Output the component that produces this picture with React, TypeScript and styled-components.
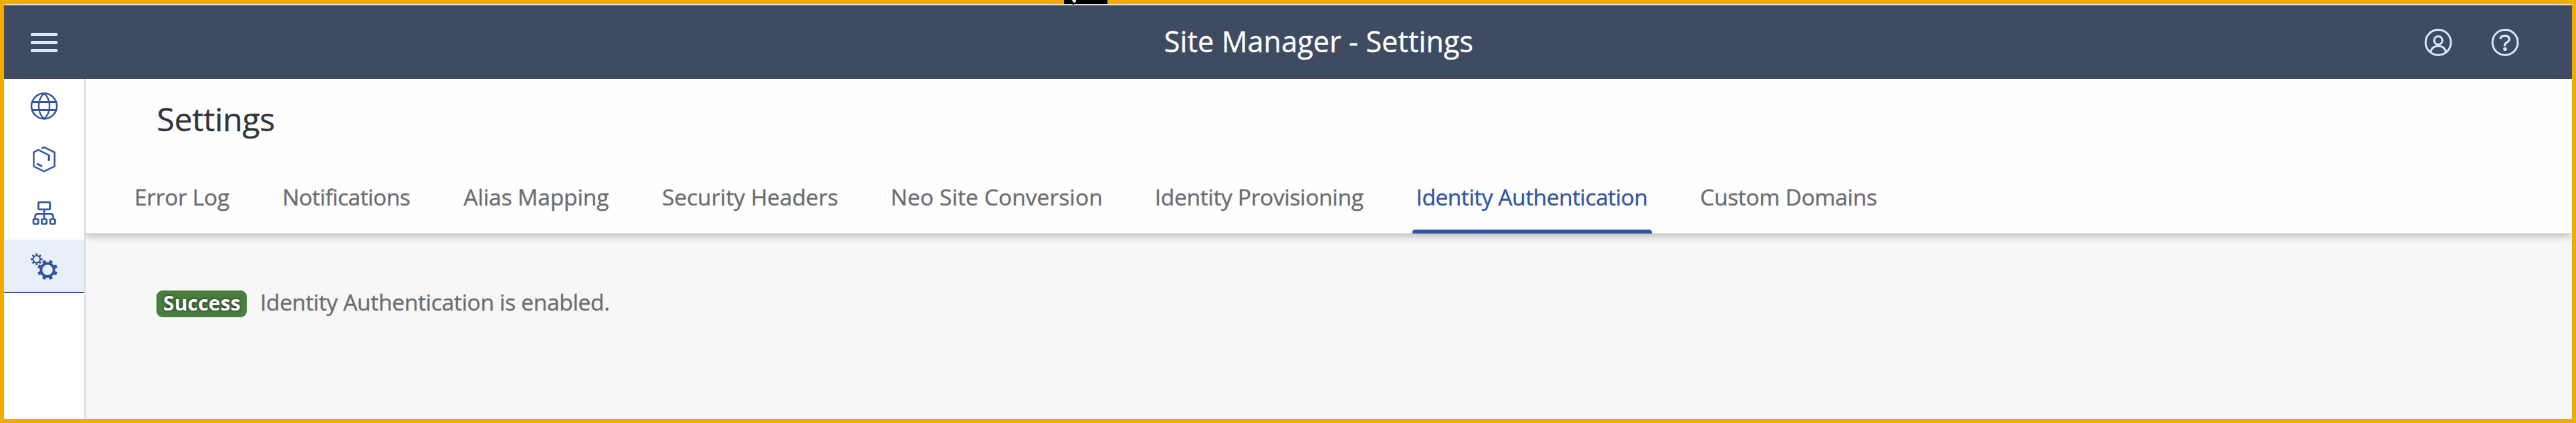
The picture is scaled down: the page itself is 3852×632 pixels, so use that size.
import React from 'react';
import styled, { createGlobalStyle, css } from 'styled-components';

const GlobalStyle = createGlobalStyle`
  * { box-sizing: border-box; }
  body { margin: 0; font-family: "Open Sans", "Noto Sans", sans-serif; font-weight: 400; }
`;

const Frame = styled.div`
  position: relative;
  display: flex;
  flex-direction: column;
  width: 3852px;
  height: 632px;
  padding: 6px;
  background: #f0ab00;
  overflow: hidden;
`;

const TopMark = styled.svg`
  position: absolute;
  top: 0;
  left: 1591px;
  display: block;
`;

const Shell = styled.header`
  flex: 0 0 112px;
  display: grid;
  grid-template-columns: 1fr auto 1fr;
  align-items: center;
  border-top: 2px solid #e2e2e2;
  background: #3f4b61;
  padding: 0 80px 0 40px;
  color: #d9e7fe;
`;

const ShellTitle = styled.h1`
  margin: 0 0 3px 132px;
  font-size: 43px;
  font-weight: 400;
  line-height: 60px;
  letter-spacing: 0.167px;
  white-space: nowrap;
  color: #fff;
  -webkit-text-stroke: 0.4px currentColor;
`;

const ShellActions = styled.div`
  display: flex;
  justify-content: flex-end;
  gap: 60px;
`;

const Icon = styled.svg`
  display: block;
  width: 40px;
  height: 40px;
  overflow: visible;
  fill: none;
  stroke: currentColor;
`;

const Body = styled.div`
  flex: 1;
  display: flex;
  min-height: 0;
  background: #f7f7f7;
  overflow: hidden;
`;

const SideNav = styled.nav`
  flex: 0 0 122px;
  position: relative;
  z-index: 1;
  border-right: 2px solid #d9d9d9;
  background: #fff;
  color: #3155a1;
`;

const NavItem = styled.div<{ $active?: boolean }>`
  display: flex;
  align-items: center;
  justify-content: center;
  height: 80px;
  ${p => p.$active && css`
    background: #e8eff9;
    box-shadow: inset 0 -2px 0 #3155a1;
  `}
`;

const Main = styled.main`
  flex: 1;
  min-width: 0;
`;

const PageHeader = styled.section`
  height: 232px;
  padding-top: 28px;
  background: #fefefe;
  border-bottom: 2px solid #d9d9d9;
  box-shadow: 0 2px 12px rgba(0, 0, 0, 0.28);
`;

const PageTitle = styled.h2`
  margin: 0 0 32px;
  padding-left: 106.5px;
  font-size: 48px;
  font-weight: 400;
  line-height: 64px;
  letter-spacing: -0.182px;
  color: #32363a;
  -webkit-text-stroke: 0.4px currentColor;
`;

const Tabs = styled.div`
  display: flex;
  gap: 80px;
  height: 106px;
  padding-left: 73px;
  background: linear-gradient(#fefefe 98px, #f9f9f9 98px, #f9f9f9 99px, #fff 99px);
`;

const Tab = styled.div<{ $width: number; $spacing: number; $active?: boolean }>`
  position: relative;
  flex: 0 0 ${p => p.$width}px;
  min-width: 0;
  font-size: 33.6px;
  line-height: 105px;
  letter-spacing: ${p => p.$spacing}px;
  white-space: nowrap;
  color: ${p => (p.$active ? '#3155a1' : '#6a6d70')};
  -webkit-text-stroke: 0.4px currentColor;
  ${p => p.$active && css`
    &::after {
      content: '';
      position: absolute;
      left: -6px;
      right: -8px;
      bottom: -1px;
      height: 6px;
      border-radius: 4px 4px 0 0;
      background: #3155a1;
    }
  `}
`;

const Status = styled.div`
  display: flex;
  align-items: baseline;
  gap: 20px;
  padding: 81.5px 0 0 106px;
`;

const Badge = styled.span`
  flex: 0 0 135px;
  height: 40px;
  padding-left: 10px;
  border-radius: 9px;
  background: #4a7d40;
  color: #fff;
  font-size: 30px;
  font-weight: 700;
  line-height: 38px;
  letter-spacing: 0.188px;
  text-shadow: 0 0 4px rgba(0, 0, 0, 0.7);
`;

const Message = styled.span`
  font-size: 33.6px;
  line-height: 38px;
  letter-spacing: -0.346px;
  white-space: nowrap;
  color: #6a6d70;
  -webkit-text-stroke: 0.4px currentColor;
`;

const tabs = [
  { label: 'Error Log', width: 141.3, spacing: -0.322 },
  { label: 'Notifications', width: 191.05, spacing: -0.512 },
  { label: 'Alias Mapping', width: 216.6, spacing: -0.137 },
  { label: 'Security Headers', width: 261.75, spacing: -0.106 },
  { label: 'Neo Site Conversion', width: 315, spacing: 0.056 },
  { label: 'Identity Provisioning', width: 310.9, spacing: -0.353 },
  { label: 'Identity Authentication', width: 344.75, spacing: -0.507, active: true },
  { label: 'Custom Domains', width: 264, spacing: -0.341 },
];

/* Outline of a gear with eight flat teeth. */
function gearPath(cx: number, cy: number, outer: number, root: number, hole: number, turn: number) {
  const at = (r: number, deg: number) => {
    const a = ((deg + turn) * Math.PI) / 180;
    return `${(cx + r * Math.cos(a)).toFixed(2)} ${(cy + r * Math.sin(a)).toFixed(2)}`;
  };
  const points: string[] = [];
  for (let i = 0; i < 8; i++) {
    const d = i * 45;
    points.push(at(root, d - 13), at(outer, d - 9), at(outer, d + 9), at(root, d + 13), at(root, d + 22.5));
  }
  return (
    `M${points.join('L')}Z` +
    `M${cx - hole} ${cy}a${hole} ${hole} 0 1 0 ${hole * 2} 0a${hole} ${hole} 0 1 0 ${-hole * 2} 0Z`
  );
}

const MenuIcon = () => (
  <Icon viewBox="0 0 40 40">
    <g fill="currentColor" stroke="none">
      <rect y="6" width="40" height="5" rx="1.6" />
      <rect y="18" width="40" height="5" rx="1.6" />
      <rect y="30" width="40" height="5" rx="1.6" />
    </g>
  </Icon>
);

const UserIcon = () => (
  <Icon viewBox="0 -0.4 40 40" strokeWidth="3">
    <circle cx="20" cy="20" r="18.9" />
    <circle cx="20" cy="17" r="6.2" />
    <path d="M8.4 34.6C9.6 28.6 14.6 25.2 20 25.2S30.4 28.6 31.6 34.6" />
  </Icon>
);

const HelpIcon = () => (
  <Icon viewBox="0 -0.4 40 40" strokeWidth="3">
    <circle cx="20" cy="20" r="18.9" />
    <path d="M12.9 14.6C13.4 11.6 16.4 10 20 10C23.9 10 26.2 12 26.2 15.2C26.2 20.2 19.3 19.6 19.3 24.4V25.8" strokeWidth="3.2" />
    <circle cx="20" cy="29.8" r="2.8" fill="currentColor" stroke="none" />
  </Icon>
);

const GlobeIcon = () => (
  <Icon viewBox="0 -0.5 40 40" strokeWidth="2.6">
    <circle cx="20" cy="20" r="19" />
    <path d="M20 1.2C14 6.2 11.9 13 11.9 20S14 33.8 20 38.8C26 33.8 28.1 27 28.1 20S26 6.2 20 1.2Z" strokeWidth="2.4" />
    <path d="M2 14H38M2 26H38" strokeWidth="3" />
  </Icon>
);

const ProductIcon = () => (
  <Icon viewBox="0 -0.5 40 40" strokeWidth="2.5">
    <path d="M16 3.2L20 1.6L35.6 9V30L20 37.6L4.4 30V9L11.4 5.4L27.2 13.4V21.8" />
    <path d="M27.2 13V21.8M9 26L17 30" strokeWidth="3" />
  </Icon>
);

const OrgIcon = () => (
  <Icon viewBox="0 -0.5 40 40" strokeWidth="2.7">
    <rect x="11.5" y="3.7" width="17.2" height="10.6" rx="1" />
    <path d="M20 14.5V28M6.6 28V25Q6.6 20.8 11 20.8H29Q33.5 20.8 33.5 25V28" />
    <rect x="4" y="29" width="7.2" height="7" rx="1" />
    <rect x="16.4" y="29" width="7.2" height="7" rx="1" />
    <rect x="29.1" y="29" width="7.2" height="7" rx="1" />
  </Icon>
);

const SettingsIcon = () => (
  <Icon viewBox="0 -0.5 40 40">
    <g fill="currentColor" stroke="none" fillRule="evenodd">
      <path d={gearPath(8.8, 8.8, 8.9, 6.3, 4.3, 0)} />
      <path d={gearPath(25, 24.8, 15.2, 11.6, 7.8, 22.5)} />
    </g>
  </Icon>
);

export default function App() {
  return (
    <>
      <GlobalStyle />
      <Frame>
        <Shell>
          <MenuIcon />
          <ShellTitle>Site Manager - Settings</ShellTitle>
          <ShellActions>
            <UserIcon />
            <HelpIcon />
          </ShellActions>
        </Shell>
        <Body>
          <SideNav>
            <NavItem><GlobeIcon /></NavItem>
            <NavItem><ProductIcon /></NavItem>
            <NavItem><OrgIcon /></NavItem>
            <NavItem $active><SettingsIcon /></NavItem>
          </SideNav>
          <Main>
            <PageHeader>
              <PageTitle>Settings</PageTitle>
              <Tabs>
                {tabs.map(tab => (
                  <Tab key={tab.label} $width={tab.width} $spacing={tab.spacing} $active={tab.active}>
                    {tab.label}
                  </Tab>
                ))}
              </Tabs>
            </PageHeader>
            <Status>
              <Badge>Success</Badge>
              <Message>Identity Authentication is enabled.</Message>
            </Status>
          </Main>
        </Body>
        <TopMark width="65" height="8" viewBox="0 0 65 8">
          <rect width="65" height="6" fill="#000" />
          <path d="M12 0H18L17.5 3L15.5 4L13.5 3Z" fill="#fff" />
          <rect x="13" y="6" width="2" height="1" fill="#000" />
        </TopMark>
      </Frame>
    </>
  );
}
